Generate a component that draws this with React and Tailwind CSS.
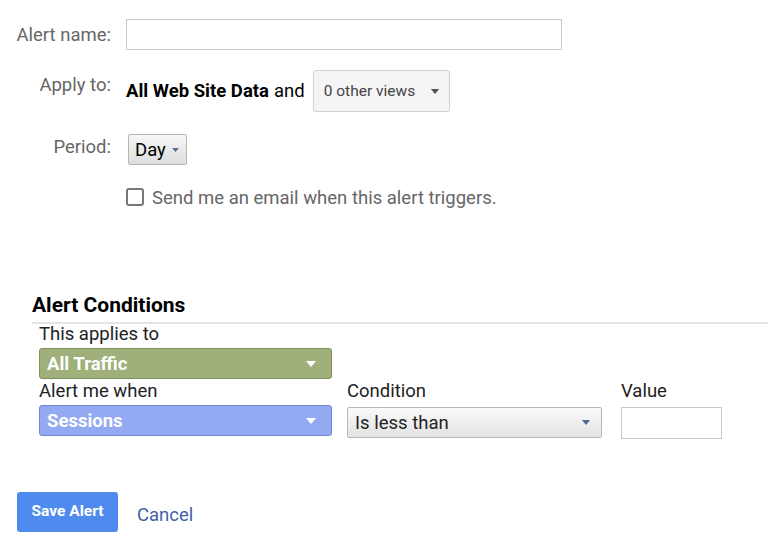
import React, { useState } from "react";

function Caret({ className = "" }) {
  return (
    <svg width="10" height="6" viewBox="0 0 10 6" className={className}>
      <path d="M0 0h10L5 6z" fill="currentColor" />
    </svg>
  );
}

function ColorSelect({ label, tone }) {
  const tones = {
    green: "bg-[#9fb07a] border-[#7f905e]",
    blue: "bg-[#93a9f1] border-[#6f86d2]",
  };
  return (
    <div
      className={`flex h-[31px] w-[293px] items-center justify-between rounded-[3px] border pl-[7px] pr-[14px] ${tones[tone]}`}
    >
      <span className="text-[18.5px] font-bold leading-[22px] text-white">{label}</span>
      <Caret className="h-[6px] w-[12px] text-white" />
    </div>
  );
}

export default function App() {
  const [name, setName] = useState("");
  const [email, setEmail] = useState(false);
  const [value, setValue] = useState("");

  return (
    <div className="min-h-[547px] w-[768px] bg-white font-['Roboto',sans-serif] text-[#222]">
      {/* alert settings */}
      <div className="pt-[19px]">
        <div className="flex h-[31px] items-center gap-[15px]">
          <label className="w-[111px] text-right text-[18.5px] leading-[22px] text-[#666]">
            Alert name:
          </label>
          <input
            value={name}
            onChange={(e) => setName(e.target.value)}
            className="h-[31px] w-[436px] border border-[#c8c8c8] bg-white px-2 text-[15px] outline-none"
          />
        </div>

        <div className="mt-[20px] flex items-start gap-[15px]">
          <label className="mt-[4px] w-[111px] text-right text-[18.5px] leading-[22px] text-[#666]">
            Apply to:
          </label>
          <div className="flex h-[42px] items-center text-[18.5px] leading-[22px] text-black">
            <span className="font-bold">All Web Site Data</span>
            <span className="ml-[5px]">and</span>
            <button className="ml-[8px] flex h-[42px] w-[137px] items-center rounded-[3px] border border-[#d0d0d0] bg-[#f5f5f5] pl-[10px] text-[15.5px] text-[#444]">
              0 other views
              <Caret className="ml-[15px] h-[5px] w-[10px] text-[#555]" />
            </button>
          </div>
        </div>

        <div className="mt-[22px] flex items-center gap-[15px]">
          <label className="-mt-[5px] w-[111px] text-right text-[18.5px] leading-[22px] text-[#666]">
            Period:
          </label>
          <button className="ml-[2px] flex h-[31px] w-[59px] items-center rounded-[2px] border border-[#b5b5b5] bg-gradient-to-b from-[#f7f7f7] to-[#dedede] pl-[6px] text-[18.5px] leading-[22px] text-black">
            Day
            <Caret className="ml-[5px] h-[4px] w-[9px] text-[#4f6a95]" />
          </button>
        </div>

        <label className="ml-[126px] mt-[22px] flex h-[22px] items-center gap-[8px] text-[18.5px] leading-[22px] text-[#666]">
          <input
            type="checkbox"
            checked={email}
            onChange={(e) => setEmail(e.target.checked)}
            className="-mt-[2px] h-[18px] w-[18px] appearance-none rounded-[3px] border-2 border-[#777] bg-white checked:bg-[#4e8bef]"
          />
          Send me an email when this alert triggers.
        </label>
      </div>

      {/* alert conditions */}
      <div className="mt-[84px] pl-[32px]">
        <h2 className="text-[21px] font-bold leading-6 text-black">Alert Conditions</h2>
        <div className="mt-[5px] h-[2px] bg-[#e4e4e4]" />
        <div className="pl-[7px] text-[18.5px] leading-5 text-[#222]">
          <div>This applies to</div>
          <div className="mt-[4px]">
            <ColorSelect label="All Traffic" tone="green" />
          </div>

          <div className="mt-[2px] flex">
            <div className="w-[293px]">
              <div>Alert me when</div>
              <div className="mt-[4px]">
                <ColorSelect label="Sessions" tone="blue" />
              </div>
            </div>
            <div className="ml-[15px] w-[256px]">
              <div>Condition</div>
              <button className="mt-[6px] flex h-[31px] w-[255px] items-center justify-between rounded-[2px] border border-[#b8b8b8] bg-gradient-to-b from-[#fafafa] to-[#e2e2e2] pl-[7px] pr-[10px] text-[18.5px] text-[#222]">
                Is less than
                <Caret className="h-[5px] w-[10px] text-[#4f6a95]" />
              </button>
            </div>
            <div className="ml-[18px]">
              <div>Value</div>
              <input
                value={value}
                onChange={(e) => setValue(e.target.value)}
                className="mt-[6px] h-[32px] w-[101px] border border-[#c8c8c8] bg-white px-1 outline-none"
              />
            </div>
          </div>
        </div>
      </div>

      {/* actions */}
      <div className="mt-[53px] flex items-center pl-[17px]">
        <button className="h-[40px] w-[101px] rounded-[3px] bg-[#4f8bef] text-[15.5px] font-bold text-white">
          Save Alert
        </button>
        <button className="ml-[19px] mt-[5px] text-[18.5px] leading-[22px] text-[#3f5fa8]">
          Cancel
        </button>
      </div>
    </div>
  );
}
